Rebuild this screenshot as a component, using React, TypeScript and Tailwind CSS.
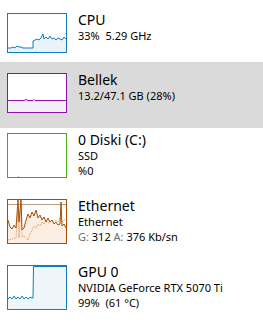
import type { ReactNode } from "react";

const font = { fontFamily: '"Noto Sans", "Open Sans", sans-serif' };

type Row = {
  title: string;
  lines: ReactNode[];
  color: string;
  tall: boolean;
  selected?: boolean;
  chart: ReactNode;
  rowClass: string;
};

const CpuChart = () => (
  <svg viewBox="0 0 58 38" preserveAspectRatio="none" className="w-full h-full">
    <polygon
      fill="#eaf3fa"
      points="0,34 3,34 5,33 7,34 9,32 11,33 13,33 15,34 18,34 21,34 24,34 25,34 25,27 27,26 29,25 31,26 33,24 35,20 36,25 38,23 40,25 42,22 44,25 46,24 48,26 50,24 52,25 54,26 56,23 58,25 58,38 0,38"
    />
    <polyline
      fill="none"
      stroke="#117dbb"
      strokeWidth="1"
      points="0,34 3,34 5,33 7,34 9,32 11,33 13,33 15,34 18,34 21,34 24,34 25,34 25,27 27,26 29,25 31,26 33,24 35,20 36,25 38,23 40,25 42,22 44,25 46,24 48,26 50,24 52,25 54,26 56,23 58,25"
    />
  </svg>
);

const MemChart = () => (
  <svg viewBox="0 0 58 38" preserveAspectRatio="none" className="w-full h-full">
    <rect x="0" y="26.5" width="58" height="12" fill="#f4eff5" />
    <polyline
      fill="none"
      stroke="#8b12ae"
      strokeWidth="1"
      points="0,26.5 16,26.5 18,25.5 20,26.5 25,26.5 26,25.5 27,26.5 58,26.5"
    />
  </svg>
);

const DiskChart = () => (
  <svg viewBox="0 0 58 43" preserveAspectRatio="none" className="w-full h-full">
    <rect x="10" y="42" width="1" height="1" fill="#9ccf7a" />
  </svg>
);

const NetChart = () => (
  <svg viewBox="0 0 58 43" preserveAspectRatio="none" className="w-full h-full">
    <polygon
      fill="#fdeee3"
      points="0,20 2,27 4,29 6,25 8,28 10,0 11,22 13,0 14,30 16,28 18,20 20,14 22,18 24,12 26,16 28,10 30,18 32,15 34,20 36,17 38,22 40,18 42,22 44,20 46,24 48,22 50,25 52,24 53,2 54,26 56,24 58,28 58,43 0,43"
    />
    <line x1="0" y1="4.5" x2="58" y2="4.5" stroke="#b99a82" strokeWidth="1" />
    <polyline
      fill="none"
      stroke="#d8905a"
      strokeWidth="1"
      strokeDasharray="1 1"
      points="0,40 4,39 8,38 10,10 11,38 13,5 14,37 16,36 18,38 20,40 22,34 24,30 26,26 28,28 30,24 32,26 34,22 36,24 38,21 40,23 42,22 44,20 46,22 48,20 50,22 52,18 54,22 56,20 58,19"
    />
    <polyline
      fill="none"
      stroke="#a74f01"
      strokeWidth="1"
      points="0,20 2,27 4,29 6,25 8,28 10,0 11,22 13,0 14,30 16,28 18,20 20,14 22,18 24,12 26,16 28,10 30,18 32,15 34,20 36,17 38,22 40,18 42,22 44,20 46,24 48,22 50,25 52,24 53,2 54,26 56,24 58,28"
    />
  </svg>
);

const GpuChart = () => (
  <svg viewBox="0 0 58 43" preserveAspectRatio="none" className="w-full h-full">
    <polygon fill="#eef5fb" points="0,33 25,32 25,0 58,0 58,43 0,43" />
    <polyline
      fill="none"
      stroke="#117dbb"
      strokeWidth="1"
      points="0,33 2,31 4,33 6,30 8,33 10,31 12,33 14,30 16,33 18,31 20,33 22,31 24,32 25,32 25.5,0.5 58,0.5"
    />
  </svg>
);

const rows: Row[] = [
  {
    title: "CPU",
    lines: ["33%  5.29 GHz"],
    color: "#117dbb",
    tall: false,
    chart: <CpuChart />,
    rowClass: "h-[62px] pt-[13px]",
  },
  {
    title: "Bellek",
    lines: ["13.2/47.1 GB (28%)"],
    color: "#8b12ae",
    tall: false,
    selected: true,
    chart: <MemChart />,
    rowClass: "h-[66px] pt-[11px]",
  },
  {
    title: "0 Diski (C:)",
    lines: ["SSD", "%0"],
    color: "#4da60c",
    tall: true,
    chart: <DiskChart />,
    rowClass: "h-[66px] pt-[5px]",
  },
  {
    title: "Ethernet",
    lines: [
      "Ethernet",
      <>
        <span className="text-[#6d6d6d]">G:</span> 312{" "}
        <span className="text-[#6d6d6d]">A:</span> 376 Kb/sn
      </>,
    ],
    color: "#a74f01",
    tall: true,
    chart: <NetChart />,
    rowClass: "h-[66px] pt-[5px]",
  },
  {
    title: "GPU 0",
    lines: ["NVIDIA GeForce RTX 5070 Ti", "99%  (61 °C)"],
    color: "#117dbb",
    tall: true,
    chart: <GpuChart />,
    rowClass: "h-[75px] pt-[5px]",
  },
];

export default function App() {
  return (
    <div className="w-[263px] h-[335px] bg-white overflow-hidden" style={font}>
      {rows.map((r) => (
        <div
          key={r.title}
          className={`flex items-start pl-[7px] ${r.rowClass} ${r.selected ? "bg-[#dadada]" : ""}`}
        >
          <div
            className={`w-[60px] ${r.tall ? "h-[45px]" : "h-[40px]"} border bg-white shrink-0`}
            style={{ borderColor: r.color }}
          >
            {r.chart}
          </div>
          <div className="ml-[11px] -mt-[2px] text-black whitespace-pre">
            <div className="text-[14px] leading-[17px]">{r.title}</div>
            {r.lines.map((l, i) => (
              <div key={i} className="text-[11px] leading-[15px]">
                {l}
              </div>
            ))}
          </div>
        </div>
      ))}
    </div>
  );
}
